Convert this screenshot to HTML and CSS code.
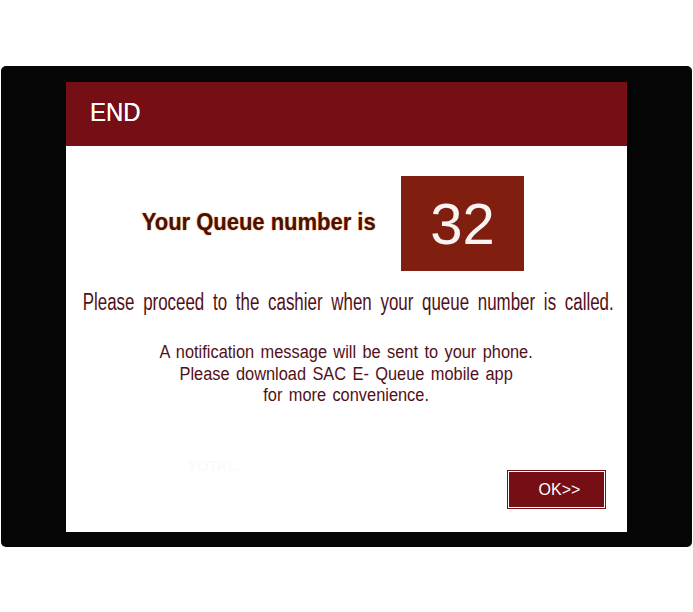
FILE: index.html
```html
<!DOCTYPE html>
<html>
<head>
<meta charset="utf-8">
<link rel="stylesheet" href="styles.css">
</head>
<body>
<div class="frame">
  <div class="panel">
    <div class="header"><span class="title">END</span></div>
    <div class="content">
      <div class="queue-row">
        <span class="queue-label">Your Queue number is</span>
        <div class="queue-box">32</div>
      </div>
      <p class="proceed"><span class="narrow">Please proceed to the cashier when your queue number is called.</span></p>
      <p class="notice"><span class="narrow-sm">A notification message will be sent to your phone.<br>Please download SAC E- Queue mobile app<br>for more convenience.</span></p>
      <div class="footer">
        <span class="total">TOTAL:</span>
        <button class="ok-btn">OK&gt;&gt;</button>
      </div>
    </div>
  </div>
</div>
</body>
</html>
```
FILE: styles.css
```css
html, body {
  margin: 0;
  padding: 0;
  background: #ffffff;
}
body {
  font-family: "Liberation Sans", Arial, sans-serif;
}
.frame {
  margin: 66px 1px 0 1px;
  width: 691px;
  height: 481px;
  box-sizing: border-box;
  padding: 16px 65px 15px 65px;
  background: #050505;
  border-radius: 5px;
}
.panel {
  width: 561px;
  height: 450px;
  display: flex;
  flex-direction: column;
  background: #ffffff;
  overflow: hidden;
}
.header {
  height: 64px;
  box-sizing: border-box;
  padding: 17px 0 0 24px;
  background: #760e16;
}
.title {
  display: inline-block;
  color: #ffffff;
  font-size: 26px;
  line-height: 26px;
  transform: scaleX(0.92);
  transform-origin: left center;
  text-shadow: 0 0 0.4px #ffffff;
}
.content {
  flex: 1;
  display: flex;
  flex-direction: column;
}
.queue-row {
  margin-top: 30px;
  display: flex;
  justify-content: flex-end;
  align-items: center;
  gap: 25px;
  padding-right: 103px;
}
.queue-label {
  display: inline-block;
  margin-bottom: 4px;
  font-size: 24px;
  font-weight: bold;
  color: #4a1104;
  text-shadow: 0 0 1px #f0a060, 0 0 1.5px #f0a060;
  transform: scaleX(0.915);
  transform-origin: right center;
  white-space: nowrap;
}
.queue-box {
  width: 123px;
  height: 95px;
  background: #801e0f;
  color: #f7f4f2;
  font-size: 58px;
  line-height: 95px;
  text-align: center;
}
.proceed {
  margin: 17px 0 0 0;
  display: flex;
  justify-content: center;
  padding-left: 4px;
  font-size: 23px;
  line-height: 28px;
  color: #521019;
  white-space: nowrap;
}
.narrow {
  flex: none;
  display: block;
  transform: scaleX(0.735);
  transform-origin: center center;
  word-spacing: 5.5px;
}
.notice {
  margin: 26px 0 0 0;
  text-align: center;
  font-size: 18px;
  line-height: 21.5px;
  color: #521019;
}
.narrow-sm {
  display: inline-block;
  transform: scaleX(0.91);
  word-spacing: 2px;
}
.footer {
  margin-top: auto;
  display: flex;
  justify-content: space-between;
  align-items: flex-start;
  padding: 0 21px 23px 122px;
}
.total {
  font-size: 15px;
  font-weight: bold;
  line-height: 16px;
  color: #fdfafa;
}
.ok-btn {
  margin-top: 12px;
  width: 99px;
  height: 39px;
  padding: 0 0 0 6px;
  background: #760e16;
  border: 1px solid #760e16;
  box-shadow: inset 0 0 0 1px #ffffff;
  color: #ffffff;
  font-family: "Liberation Sans", Arial, sans-serif;
  font-size: 16px;
}
```
